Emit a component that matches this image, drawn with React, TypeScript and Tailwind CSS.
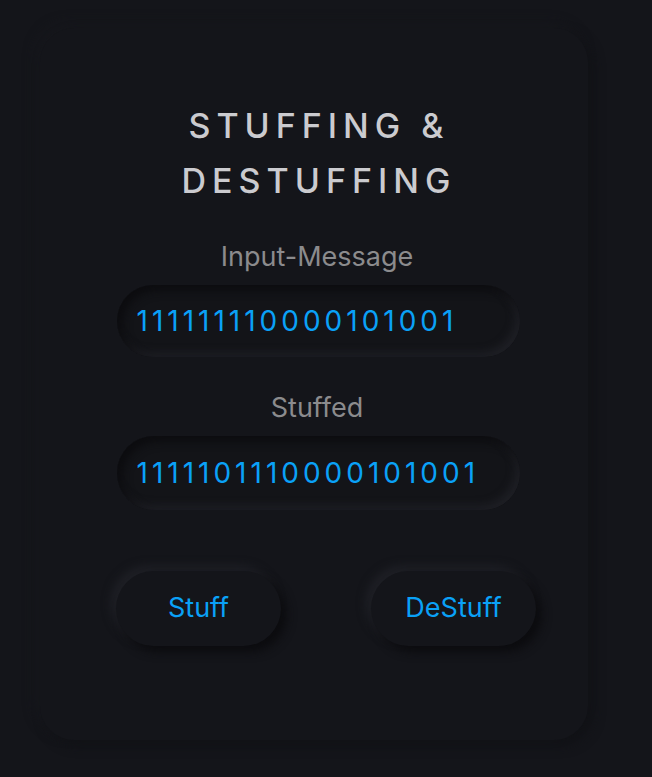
import React from "react";

const font = { fontFamily: "Inter, 'Open Sans', sans-serif" };

export default function App() {
  return (
    <div
      className="min-h-[777px] w-[652px] bg-[#14151a] pt-[28px] pl-[40px]"
      style={font}
    >
      <div className="w-[548px] h-[712px] rounded-[34px] bg-[#14151a] shadow-[5px_5px_12px_#111216,-5px_-5px_12px_#17181d] flex flex-col items-center pt-[70px]">
        <h1 className="text-[34px] leading-[55px] tracking-[6px] text-center text-[#cbcbcf] font-medium pl-[10px]">
          STUFFING &amp;
          <br />
          DESTUFFING
        </h1>
        <div className="mt-[31px] text-[27px] leading-[36px] text-[#8b8b8d] pl-[6px]">
          Input-Message
        </div>
        <div className="mt-[10px] ml-[8px] w-[403px] h-[72px] rounded-full bg-[#131418] shadow-[inset_5px_5px_10px_#0c0c0f,inset_-4px_-4px_8px_#202127] flex items-center pl-[20px]">
          <span className="text-[28px] tracking-[4px] text-[#0aa1f7]">
            111111110000101001
          </span>
        </div>
        <div className="mt-[33px] text-[27px] leading-[36px] text-[#8b8b8d] pl-[6px]">
          Stuffed
        </div>
        <div className="mt-[10px] ml-[8px] w-[403px] h-[74px] rounded-full bg-[#131418] shadow-[inset_5px_5px_10px_#0c0c0f,inset_-4px_-4px_8px_#202127] flex items-center pl-[20px]">
          <span className="text-[28px] tracking-[4px] text-[#0aa1f7]">
            1111101110000101001
          </span>
        </div>
        <div className="self-stretch mt-[61px] pl-[76px] flex gap-[90px]">
          <button className="w-[165px] h-[75px] rounded-full bg-[#14151a] shadow-[6px_6px_10px_#0c0c0f,-5px_-5px_10px_#1f2026] text-[27px] text-[#0aa1f7]">
            Stuff
          </button>
          <button className="w-[165px] h-[75px] rounded-full bg-[#14151a] shadow-[6px_6px_10px_#0c0c0f,-5px_-5px_10px_#1f2026] text-[27px] text-[#0aa1f7]">
            DeStuff
          </button>
        </div>
      </div>
    </div>
  );
}
